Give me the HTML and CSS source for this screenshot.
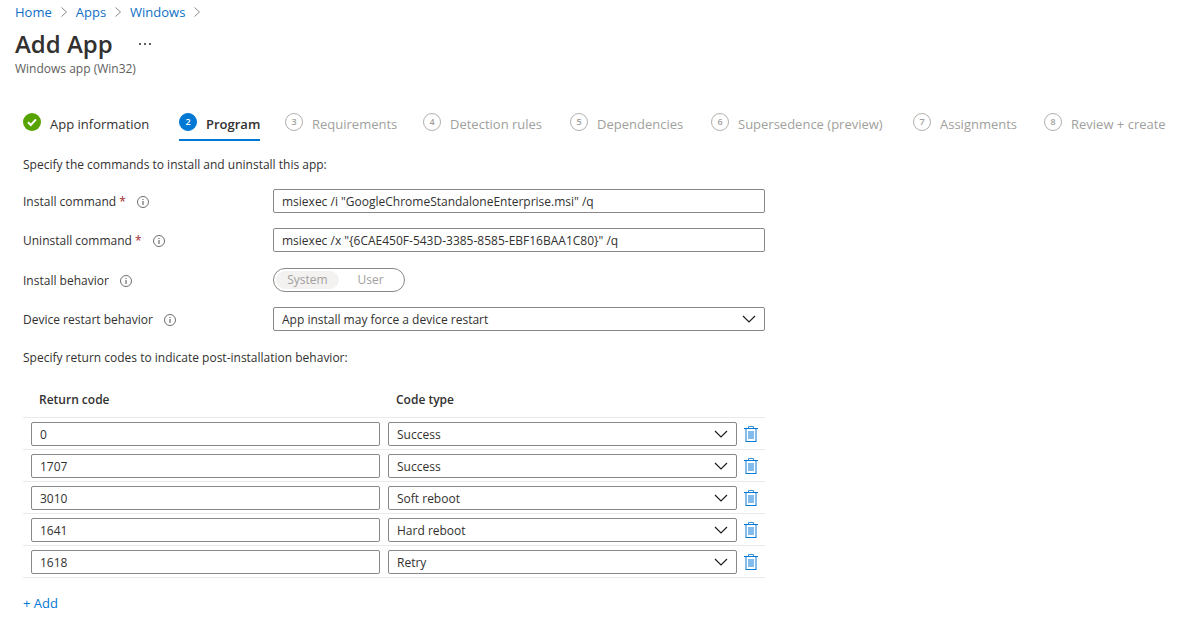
FILE: index.html
```html
<!DOCTYPE html>
<html lang="en">
<head>
<meta charset="utf-8">
<meta name="viewport" content="width=device-width, initial-scale=1">
<title>Add App</title>
<link rel="stylesheet" href="styles.css">
</head>
<body>
<svg class="sprite" aria-hidden="true">
  <symbol id="sep" viewBox="0 0 8 12"><path d="M1.5 1.5 6.500 6l-5 4.500" fill="none" stroke="#8a8886"/></symbol>
  <symbol id="info" viewBox="0 0 12 12"><circle cx="6" cy="6" r="5.500" fill="none" stroke="#605e5c" stroke-width=".9"/><path d="M6 5v4M6 3v1.100" stroke="#605e5c" stroke-width="1.100"/></symbol>
  <symbol id="chevron" viewBox="0 0 14 8"><path d="M1 1l6 6 6-6" fill="none" stroke="#201f1e" stroke-width="1.200"/></symbol>
  <symbol id="trash" viewBox="0 0 14 16"><path d="M1 3h12v13H1z" fill="#83bcec"/><path d="M3 3h8v12H3z" fill="#fff"/><path d="M4 5h6v8H4z" fill="#83bcec"/><path d="M0 2.500h14M2 15.500h10" stroke="#0078d4" fill="none"/><path d="M4.500 2V.5h5V2" fill="none" stroke="#3a95dd"/></symbol>
</svg>
<header class="page-head">
  <nav class="breadcrumb" aria-label="Breadcrumb">
    <a href="#home">Home</a><svg class="sep"><use href="#sep"/></svg>
    <a href="#apps">Apps</a><svg class="sep"><use href="#sep"/></svg>
    <a href="#windows">Windows</a><svg class="sep"><use href="#sep"/></svg>
  </nav>
  <div class="title-row">
    <h1>Add App</h1>
    <button class="more" type="button" aria-label="More actions"><svg viewBox="0 0 12 2" width="12" height="2"><path d="M0 0h2v2H0zM5 0h2v2H5zM10 0h2v2h-2z" fill="#605e5c"/></svg></button>
  </div>
  <p class="subtitle">Windows app (Win32)</p>
</header>

<main class="content">
  <nav class="steps" aria-label="Steps">
    <a class="step done" href="#s1"><svg class="check" viewBox="0 0 18 18"><circle cx="9" cy="9" r="9" fill="#57a300"/><path d="M5 9.300l2.800 2.700L13 6.300" fill="none" stroke="#fff" stroke-width="2"/></svg><span>App information</span></a>
    <a class="step current" href="#s2" aria-current="step"><span class="num">2</span><span>Program</span></a>
    <a class="step" href="#s3"><span class="num">3</span><span>Requirements</span></a>
    <a class="step" href="#s4"><span class="num">4</span><span>Detection rules</span></a>
    <a class="step" href="#s5"><span class="num">5</span><span>Dependencies</span></a>
    <a class="step" href="#s6"><span class="num">6</span><span>Supersedence (preview)</span></a>
    <a class="step" href="#s7"><span class="num">7</span><span>Assignments</span></a>
    <a class="step" href="#s8"><span class="num">8</span><span>Review + create</span></a>
  </nav>

  <form class="form">
    <p class="note">Specify the commands to install and uninstall this app:</p>
    <div class="fields">
      <div class="field">
        <div class="caption"><label for="install">Install command <span class="req">*</span></label><button class="info" type="button" aria-label="About install command"><svg><use href="#info"/></svg></button></div>
        <input class="box" id="install" type="text" value="msiexec /i &quot;GoogleChromeStandaloneEnterprise.msi&quot; /q">
      </div>
      <div class="field">
        <div class="caption"><label for="uninstall">Uninstall command <span class="req">*</span></label><button class="info" type="button" aria-label="About uninstall command"><svg><use href="#info"/></svg></button></div>
        <input class="box" id="uninstall" type="text" value="msiexec /x &quot;{6CAE450F-543D-3385-8585-EBF16BAA1C80}&quot; /q">
      </div>
      <div class="field">
        <div class="caption"><span id="behavior">Install behavior</span><button class="info" type="button" aria-label="About install behavior"><svg><use href="#info"/></svg></button></div>
        <div class="toggle" role="radiogroup" aria-labelledby="behavior">
          <input type="radio" name="behavior" id="system" checked disabled><label for="system">System</label>
          <input type="radio" name="behavior" id="user" disabled><label for="user">User</label>
        </div>
      </div>
      <div class="field">
        <div class="caption"><label for="restart">Device restart behavior</label><button class="info" type="button" aria-label="About device restart behavior"><svg><use href="#info"/></svg></button></div>
        <div class="select"><select class="box" id="restart"><option>App install may force a device restart</option></select><svg><use href="#chevron"/></svg></div>
      </div>
    </div>
    <p class="note">Specify return codes to indicate post-installation behavior:</p>
    <table class="codes">
      <thead><tr><th class="col-code" id="h-code" scope="col">Return code</th><th class="col-type" id="h-type" scope="col">Code type</th><td class="col-delete"></td></tr></thead>
      <tbody>
        <tr><td><input class="box" type="text" aria-labelledby="h-code" value="0"></td><td><div class="select"><select class="box" aria-labelledby="h-type"><option>Success</option></select><svg><use href="#chevron"/></svg></div></td><td class="action"><button class="delete" type="button" aria-label="Delete 0"><svg><use href="#trash"/></svg></button></td></tr>
        <tr><td><input class="box" type="text" aria-labelledby="h-code" value="1707"></td><td><div class="select"><select class="box" aria-labelledby="h-type"><option>Success</option></select><svg><use href="#chevron"/></svg></div></td><td class="action"><button class="delete" type="button" aria-label="Delete 1707"><svg><use href="#trash"/></svg></button></td></tr>
        <tr><td><input class="box" type="text" aria-labelledby="h-code" value="3010"></td><td><div class="select"><select class="box" aria-labelledby="h-type"><option>Soft reboot</option></select><svg><use href="#chevron"/></svg></div></td><td class="action"><button class="delete" type="button" aria-label="Delete 3010"><svg><use href="#trash"/></svg></button></td></tr>
        <tr><td><input class="box" type="text" aria-labelledby="h-code" value="1641"></td><td><div class="select"><select class="box" aria-labelledby="h-type"><option>Hard reboot</option></select><svg><use href="#chevron"/></svg></div></td><td class="action"><button class="delete" type="button" aria-label="Delete 1641"><svg><use href="#trash"/></svg></button></td></tr>
        <tr><td><input class="box" type="text" aria-labelledby="h-code" value="1618"></td><td><div class="select"><select class="box" aria-labelledby="h-type"><option>Retry</option></select><svg><use href="#chevron"/></svg></div></td><td class="action"><button class="delete" type="button" aria-label="Delete 1618"><svg><use href="#trash"/></svg></button></td></tr>
      </tbody>
    </table>
    <button class="add" type="button">+ Add</button>
  </form>
</main>
</body>
</html>
```
FILE: styles.css
```css
* { box-sizing: border-box; }
body {
  margin: 0;
  background: #fff;
  color: #323130;
  font: 12px/16px "Open Sans", "Noto Sans", sans-serif;
}
button, input, select { font: inherit; color: inherit; }
button { padding: 0; border: 0; background: none; cursor: pointer; }
a { text-decoration: none; }
h1, p { margin: 0; }
.sprite { display: none; }

.page-head { padding: 4px 15px 0; }
.breadcrumb { display: flex; align-items: center; gap: 8px; font-size: 13px; }
.breadcrumb a { color: #0f6fc6; }
.sep { width: 8px; height: 12px; }
.title-row { display: flex; align-items: center; gap: 26px; margin-top: 8px; }
h1 { font-size: 24px; line-height: 32px; font-weight: 600; }
.more { display: flex; padding: 8px 0; }
.subtitle { margin-top: 1px; color: #605e5c; font-size: 12px; }

.content { padding: 36px 26px 16px 23px; }
.steps {
  display: grid;
  grid-template-columns: 156fr 106fr 138fr 147fr 141fr 202fr 131fr 125fr;
  justify-items: start;
  font-size: 13px;
}
.step {
  display: flex;
  gap: 9px;
  height: 28px;
  color: #a19f9d;
  white-space: nowrap;
}
.step span:last-child { padding-top: 3px; }
.step.done { color: #323130; }
.step.current { color: #323130; font-weight: 600; border-bottom: 2px solid #0078d4; }
.check { width: 18px; height: 18px; }
.num {
  width: 18px;
  height: 18px;
  border: 1px solid #b3b0ad;
  border-radius: 50%;
  font-size: 9px;
  line-height: 16px;
  font-weight: 600;
  text-align: center;
}
.current .num { background: #0078d4; border-color: #0078d4; color: #fff; }

.form { max-width: 742px; padding-top: 16px; }
.fields { display: grid; gap: 15px; padding: 16px 0 19px; }
.field { display: grid; grid-template-columns: 250px 1fr; align-items: center; }
.caption { display: flex; align-items: center; gap: 11px; padding-top: 2px; }
.req { color: #a4262c; }
.info, .info svg { display: block; width: 12px; height: 12px; }
.box {
  display: block;
  width: 100%;
  height: 24px;
  padding: 0 8px;
  border: 1px solid #8a8886;
  border-radius: 2px;
  background: #fff;
}
.select { position: relative; }
.select select { padding-top: 2px; appearance: none; }
.select svg {
  position: absolute;
  top: 8px;
  right: 9px;
  width: 14px;
  height: 8px;
  pointer-events: none;
}
.toggle {
  display: flex;
  justify-self: start;
  height: 24px;
  margin-top: 1px;
  padding: 2px;
  border: 1px solid #8a8886;
  border-radius: 12px;
  color: #a19f9d;
}
.toggle input { position: absolute; opacity: 0; }
.toggle label { width: 63px; border-radius: 10px; line-height: 18px; text-align: center; }
.toggle input:checked + label { background: #f3f2f1; }

.codes {
  width: 100%;
  margin-top: 16px;
  border-collapse: separate;
  border-spacing: 0;
  table-layout: fixed;
}
.codes th { height: 36px; padding: 0 12px; text-align: left; font-weight: 600; }
.codes th:first-child { padding-left: 16px; }
.codes thead th, .codes thead td { border-bottom: 1px solid #edebe9; }
.col-delete { width: 24px; }
.col-type { width: 357px; }
.codes tbody td { height: 32px; padding: 4px 4px 3px; border-bottom: 1px solid #edebe9; }
.codes tbody td:first-child { padding-left: 8px; }
.codes tbody .action { padding: 0 3px; }
.delete, .delete svg { display: block; width: 14px; height: 16px; }
.add { margin-top: 17px; color: #0078d4; font-size: 13px; }
```
